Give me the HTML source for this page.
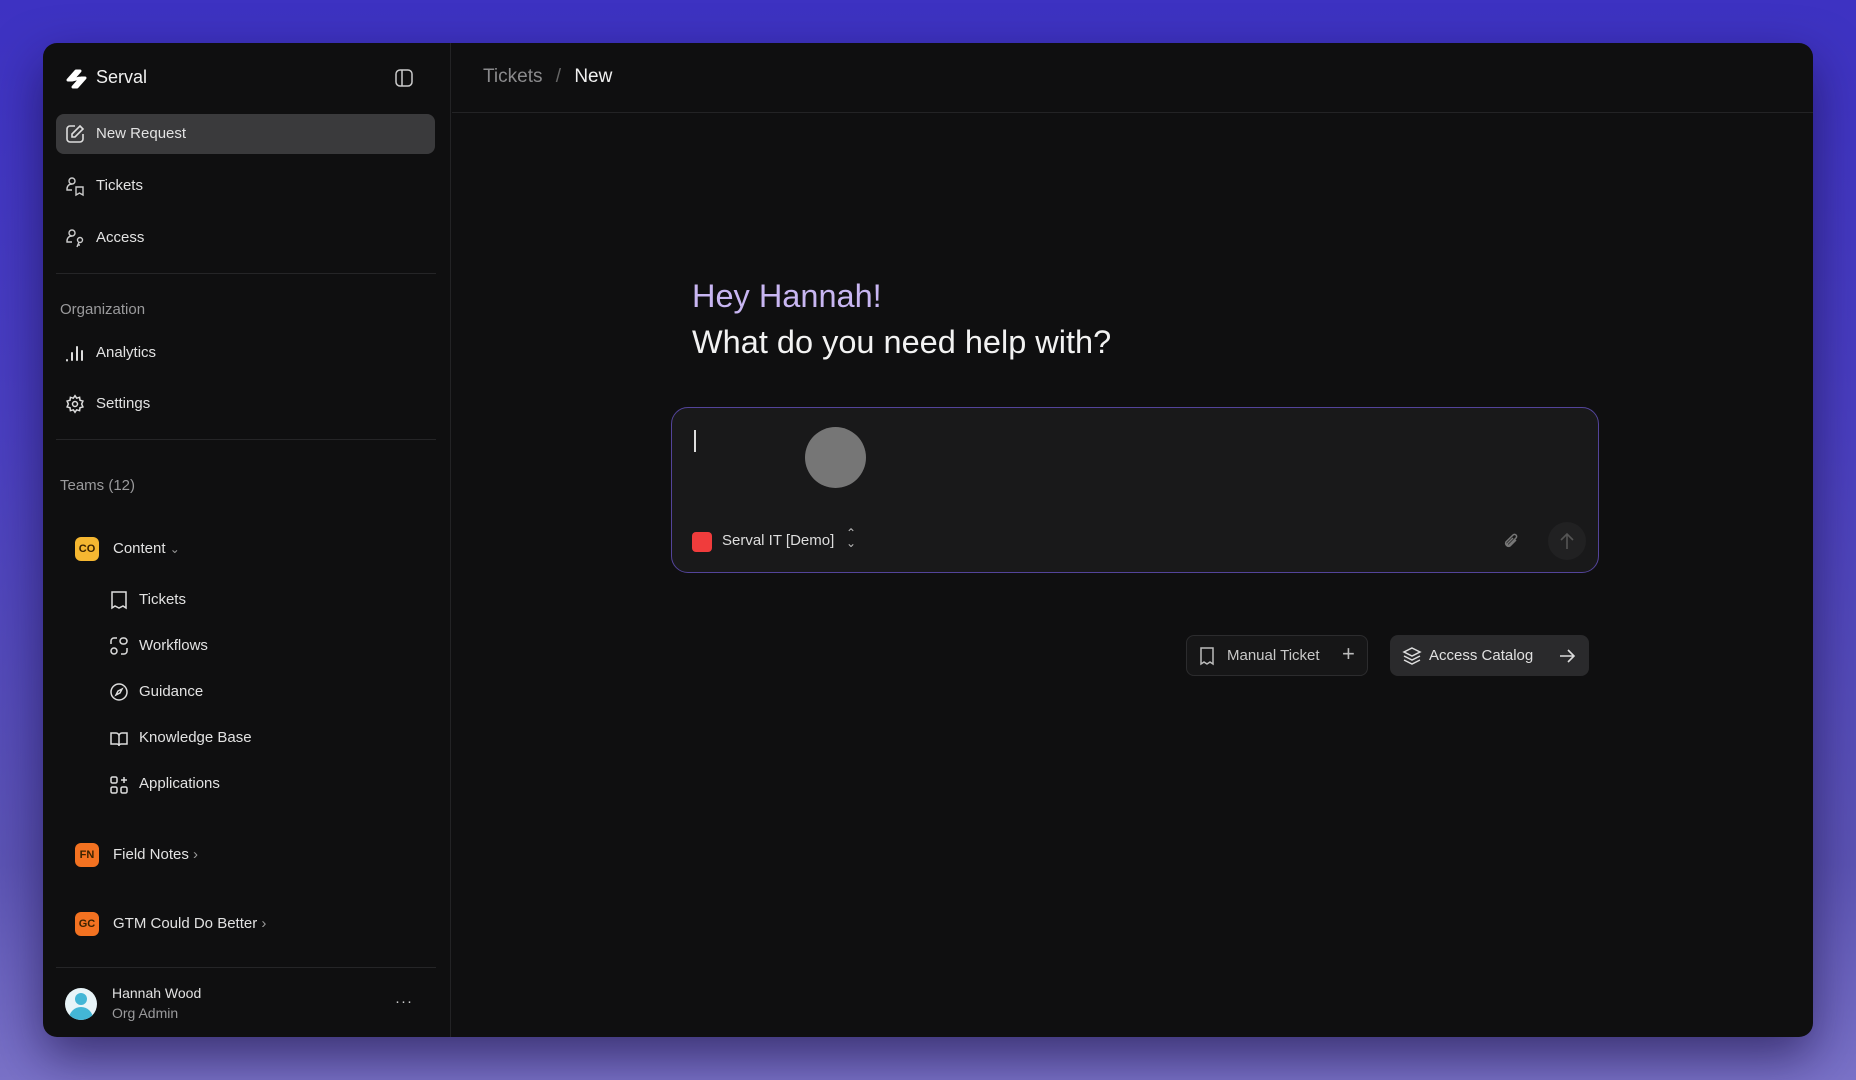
<!DOCTYPE html>
<html><head><meta charset="utf-8"><style>
*{margin:0;padding:0;box-sizing:border-box}
body{width:1856px;height:1080px;overflow:hidden;font-family:"Liberation Sans",sans-serif;background:linear-gradient(180deg,#3d32c2 0%,#4a3fc0 40%,#5c54b4 80%,#7a72c8 100%);position:relative}
.win{position:absolute;left:43px;top:43px;width:1770px;height:994px;background:#0f0f10;border-radius:14px;overflow:hidden;box-shadow:0 20px 50px rgba(20,10,60,.6)}
.side{position:absolute;left:0;top:0;width:408px;height:100%;border-right:1px solid #232325}
.abs{position:absolute}
.t{color:#e2e2e2;font-size:15px;position:absolute;white-space:nowrap}
.g{color:#9a9a9c}
svg{position:absolute;overflow:visible}
.hr{position:absolute;left:13px;width:380px;height:1px;background:#252527}
.badge{position:absolute;width:24px;height:24px;border-radius:6px;font-size:11px;font-weight:bold;display:flex;align-items:center;justify-content:center;color:#3a2200}
</style></head><body>
<div class="win">
<div class="side">
  <svg style="left:22px;top:25px" width="22" height="22" viewBox="0 0 22 22"><path d="M3 12 L11 3 L15 3 L7 12 Z M8 19 L16 10 L20 10 L12 19 Z M7 12 L15 10" stroke="#fff" stroke-width="3" fill="#fff" stroke-linejoin="round"/></svg>
  <div class="t" style="left:53px;top:24px;font-size:18px;color:#f0f0f0">Serval</div>
  <svg style="left:352px;top:26px" width="18" height="18" viewBox="0 0 18 18"><rect x="1" y="1" width="16" height="16" rx="4" fill="none" stroke="#ccc" stroke-width="1.5"/><line x1="7" y1="1" x2="7" y2="17" stroke="#ccc" stroke-width="1.5"/></svg>
  <div class="abs" style="left:13px;top:71px;width:379px;height:40px;background:#3a3a3c;border-radius:8px"></div>
  <svg style="left:22px;top:81px" width="20" height="20" viewBox="0 0 20 20" fill="none" stroke="#ddd" stroke-width="1.6"><path d="M10 2H5a3 3 0 0 0-3 3v10a3 3 0 0 0 3 3h10a3 3 0 0 0 3-3v-5"/><path d="M15 2l3 3-8 8H7v-3z"/></svg>
  <div class="t" style="left:53px;top:82px">New Request</div>
  <svg style="left:22px;top:133px" width="20" height="20" viewBox="0 0 20 20" fill="none" stroke="#ccc" stroke-width="1.4"><circle cx="7" cy="5" r="3"/><path d="M7 8c-3 0-5 2-5 5v1h5"/><path d="M11 11h7v8l-3.5-2-3.5 2z"/></svg>
  <div class="t" style="left:53px;top:134px">Tickets</div>
  <svg style="left:22px;top:185px" width="20" height="20" viewBox="0 0 20 20" fill="none" stroke="#ccc" stroke-width="1.4"><circle cx="7" cy="5" r="3"/><path d="M7 8c-3 0-5 2-5 5v1h5"/><circle cx="15" cy="12" r="2.5"/><path d="M14 14l-2 5M13 17h2"/></svg>
  <div class="t" style="left:53px;top:186px">Access</div>
  <div class="hr" style="top:230px"></div>
  <div class="t g" style="left:17px;top:258px">Organization</div>
  <svg style="left:22px;top:300px" width="20" height="20" viewBox="0 0 20 20" stroke="#ddd" stroke-width="2" stroke-linecap="round"><line x1="2" y1="17" x2="2" y2="17.5"/><line x1="7" y1="10" x2="7" y2="17"/><line x1="12" y1="4" x2="12" y2="17"/><line x1="17" y1="8" x2="17" y2="17"/></svg>
  <div class="t" style="left:53px;top:301px">Analytics</div>
  <svg style="left:22px;top:351px" width="20" height="20" viewBox="0 0 24 24" fill="none" stroke="#ddd" stroke-width="1.8"><circle cx="12" cy="12" r="3"/><path d="M12 2l2 3 3.5-1 .5 3.5 3.5 1-1.5 3.5 1.5 3.5-3.5 1-.5 3.5-3.5-1-2 3-2-3-3.5 1-.5-3.5-3.5-1L4 12 2.5 8.5l3.5-1L6.5 4 10 5z"/></svg>
  <div class="t" style="left:53px;top:352px">Settings</div>
  <div class="hr" style="top:396px"></div>
  <div class="t g" style="left:17px;top:434px">Teams (12)</div>
  <div class="badge" style="left:32px;top:494px;background:#f5b731">CO</div>
  <div class="t" style="left:70px;top:497px">Content <span style="color:#999;font-size:12px">&#8964;</span></div>
  <svg style="left:66px;top:547px" width="20" height="20" viewBox="0 0 20 20" fill="none" stroke="#ddd" stroke-width="1.5"><path d="M3 2h14v16l-3-2-4 2-4-2-3 2z"/></svg>
  <div class="t" style="left:96px;top:548px">Tickets</div>
  <svg style="left:66px;top:593px" width="20" height="20" viewBox="0 0 20 20" fill="none" stroke="#ddd" stroke-width="1.5"><path d="M2 8V5a3 3 0 0 1 3-3h3"/><rect x="11" y="2" width="7" height="6" rx="3"/><rect x="2" y="12" width="6" height="6" rx="3"/><path d="M18 12v3a3 3 0 0 1-3 3h-3"/></svg>
  <div class="t" style="left:96px;top:594px">Workflows</div>
  <svg style="left:66px;top:639px" width="20" height="20" viewBox="0 0 20 20" fill="none" stroke="#ddd" stroke-width="1.5"><circle cx="10" cy="10" r="8"/><path d="M13 7l-2 4-4 2 2-4z"/></svg>
  <div class="t" style="left:96px;top:640px">Guidance</div>
  <svg style="left:66px;top:686px" width="20" height="20" viewBox="0 0 20 20" fill="none" stroke="#ddd" stroke-width="1.5"><path d="M2 4h5a3 3 0 0 1 3 3v10a2 2 0 0 0-2-2H2zM18 4h-5a3 3 0 0 0-3 3v10a2 2 0 0 1 2-2h6z"/></svg>
  <div class="t" style="left:96px;top:686px">Knowledge Base</div>
  <svg style="left:66px;top:732px" width="20" height="20" viewBox="0 0 20 20" fill="none" stroke="#ddd" stroke-width="1.5"><rect x="2" y="2" width="6" height="6" rx="1.5"/><rect x="2" y="12" width="6" height="6" rx="1.5"/><rect x="12" y="12" width="6" height="6" rx="1.5"/><path d="M15 2v6M12 5h6"/></svg>
  <div class="t" style="left:96px;top:732px">Applications</div>
  <div class="badge" style="left:32px;top:800px;background:#f37221">FN</div>
  <div class="t" style="left:70px;top:803px">Field Notes <span style="color:#999">&#8250;</span></div>
  <div class="badge" style="left:32px;top:869px;background:#f37221">GC</div>
  <div class="t" style="left:70px;top:872px">GTM Could Do Better <span style="color:#999">&#8250;</span></div>
  <div class="hr" style="top:924px"></div>
  <div class="abs" style="left:22px;top:945px;width:32px;height:32px;border-radius:50%;background:#e8f4f8;overflow:hidden"><div class="abs" style="left:10px;top:5px;width:12px;height:12px;border-radius:50%;background:#43b6d6"></div><div class="abs" style="left:4px;top:19px;width:24px;height:16px;border-radius:12px 12px 0 0;background:#43b6d6"></div></div>
  <div class="t" style="left:69px;top:942px;font-size:14px">Hannah Wood</div>
  <div class="t g" style="left:69px;top:962px;font-size:14px">Org Admin</div>
  <div class="t" style="left:352px;top:950px;color:#ccc;letter-spacing:1px">&middot;&middot;&middot;</div>
</div>
<div class="abs" style="left:409px;top:69px;width:1361px;height:1px;background:#232325"></div>
<div class="t" style="left:440px;top:23px;font-size:19px;color:#8a8a8c">Tickets <span style="margin:0 8px;color:#666">/</span> <span style="color:#f0f0f0">New</span></div>
<div class="t" style="left:649px;top:235px;font-size:32.5px;color:#c8b6f2">Hey Hannah!</div>
<div class="t" style="left:649px;top:281px;font-size:32.5px;color:#f2f2f2">What do you need help with?</div>
<div class="abs" style="left:628px;top:364px;width:928px;height:166px;border:1.5px solid #53449a;border-radius:17px;background:#19191a"></div>
<div class="abs" style="left:651px;top:387px;width:1.5px;height:22px;background:#ddd"></div>
<div class="abs" style="left:762px;top:384px;width:61px;height:61px;border-radius:50%;background:#767676"></div>
<div class="abs" style="left:649px;top:489px;width:20px;height:20px;border-radius:4px;background:#f03c3c"></div>
<div class="t" style="left:679px;top:489px;font-size:15px;color:#ddd">Serval IT [Demo]</div>
<div class="t" style="left:803px;top:485px;font-size:12px;color:#bbb;line-height:10px">&#8963;<br>&#8964;</div>
<svg style="left:1458px;top:489px" width="20" height="20" viewBox="0 0 20 20" fill="none" stroke="#777" stroke-width="1.5"><path d="M15 8l-6 6a3 3 0 0 1-4-4l7-7a2 2 0 0 1 3 3l-7 7a1 1 0 0 1-1.5-1.5L12 6"/></svg>
<div class="abs" style="left:1505px;top:479px;width:38px;height:38px;border-radius:50%;background:#212122"></div>
<svg style="left:1515px;top:488px" width="18" height="20" viewBox="0 0 18 20" fill="none" stroke="#555" stroke-width="1.6"><path d="M9 18V3M3 9l6-6 6 6"/></svg>
<div class="abs" style="left:1143px;top:592px;width:182px;height:41px;border:1px solid #2c2c2e;border-radius:8px;background:#161617"></div>
<svg style="left:1155px;top:603px" width="18" height="20" viewBox="0 0 18 20" fill="none" stroke="#bbb" stroke-width="1.5"><path d="M3 2h12v16l-3-2-3 2-3-2-3 2z"/></svg>
<div class="t" style="left:1184px;top:604px;color:#c8c8c8">Manual Ticket</div>
<div class="t" style="left:1299px;top:598px;color:#bbb;font-size:22px">+</div>
<div class="abs" style="left:1347px;top:592px;width:199px;height:41px;border-radius:8px;background:#2a2a2c"></div>
<svg style="left:1359px;top:603px" width="20" height="20" viewBox="0 0 20 20" fill="none" stroke="#ddd" stroke-width="1.5"><path d="M10 2l8 4-8 4-8-4z M2 10l8 4 8-4 M2 14l8 4 8-4"/></svg>
<div class="t" style="left:1386px;top:604px;color:#e0e0e0">Access Catalog</div>
<svg style="left:1515px;top:604px" width="18" height="18" viewBox="0 0 18 18" fill="none" stroke="#ddd" stroke-width="1.6"><path d="M2 9h14M10 3l6 6-6 6"/></svg>
</div>
</body></html>
